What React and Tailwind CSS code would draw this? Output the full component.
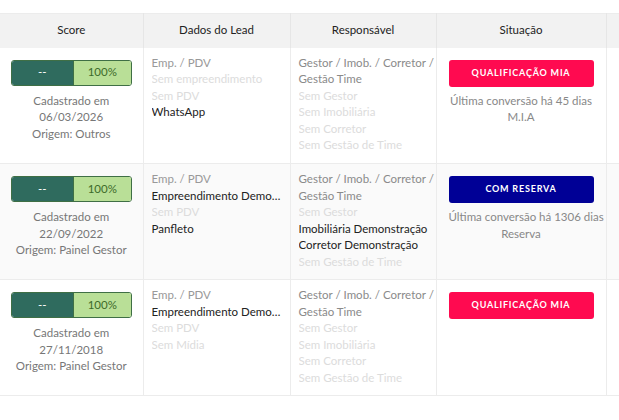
import React from 'react';

const leads = [
    {
        date: '06/03/2026',
        origem: 'Outros',
        emp: null,
        pdv: null,
        midia: 'WhatsApp',
        gestor: null,
        imob: null,
        corretor: null,
        time: null,
        status: 'QUALIFICAÇÃO MIA',
        statusColor: 'bg-[#ff0a50]',
        conversa: 'Última conversão há 45 dias',
        etapa: 'M.I.A',
        bg: 'bg-white',
    },
    {
        date: '22/09/2022',
        origem: 'Painel Gestor',
        emp: 'Empreendimento Demonstração',
        pdv: null,
        midia: 'Panfleto',
        gestor: null,
        imob: 'Imobiliária Demonstração',
        corretor: 'Corretor Demonstração',
        time: null,
        status: 'COM RESERVA',
        statusColor: 'bg-[#000096]',
        conversa: 'Última conversão há 1306 dias',
        etapa: 'Reserva',
        bg: 'bg-[#fafafa]',
    },
    {
        date: '27/11/2018',
        origem: 'Painel Gestor',
        emp: 'Empreendimento Demonstração',
        pdv: null,
        midia: null,
        gestor: null,
        imob: null,
        corretor: null,
        time: null,
        status: 'QUALIFICAÇÃO MIA',
        statusColor: 'bg-[#ff0a50]',
        conversa: null,
        etapa: null,
        bg: 'bg-white',
    },
];

function Line({ value, empty }) {
    if (value) return <div className="text-[#222] truncate">{value}</div>;
    return <div className="text-[#dcdcdc] truncate">{empty}</div>;
}

function ScoreBar() {
    return (
        <div className="flex h-[26px] mx-auto w-[121px] rounded-[3px] border border-[#3f6f45] overflow-hidden">
            <div className="w-[61px] bg-[#2f6b5e] text-white flex items-center justify-center">--</div>
            <div className="flex-1 bg-[#b9df97] text-[#3d6b2a] flex items-center justify-center border-l border-[#3f6f45]">100%</div>
        </div>
    );
}

function App() {
    return (
        <div className="w-[619px] h-[420px] bg-white overflow-hidden pt-[13px]" style={{ fontFamily: 'Lato, "Open Sans", sans-serif' }}>
            <table className="table-fixed border-collapse text-[11.5px] leading-[16.6px] w-[700px]">
                <colgroup>
                    <col className="w-[143px]" />
                    <col className="w-[147px]" />
                    <col className="w-[146px]" />
                    <col className="w-[170px]" />
                    <col />
                </colgroup>
                <thead>
                    <tr className="bg-[#f2f2f2] h-[34px] text-[#222] border-t border-[#ececec]">
                        <th className="font-normal border-r border-[#e6e6e6]">Score</th>
                        <th className="font-normal border-r border-[#e6e6e6]">Dados do Lead</th>
                        <th className="font-normal border-r border-[#e6e6e6]">Responsável</th>
                        <th className="font-normal border-r border-[#e6e6e6]">Situação</th>
                        <th className="font-normal"></th>
                    </tr>
                </thead>
                <tbody>
                    {leads.map((lead, i) => (
                        <tr key={i} className={`${lead.bg} border-b border-[#ececec] h-[116px] align-top`}>
                            <td className="border-r border-[#ececec] pt-[12px] px-[8px] text-center text-[#777]">
                                <ScoreBar />
                                <div className="mt-[7px]">Cadastrado em</div>
                                <div>{lead.date}</div>
                                <div className="whitespace-nowrap">Origem: {lead.origem}</div>
                            </td>
                            <td className="border-r border-[#ececec] pt-[7px] pl-[8px] pr-[7px]">
                                <div className="text-[#999]">Emp. / PDV</div>
                                <Line value={lead.emp} empty="Sem empreendimento" />
                                <Line value={lead.pdv} empty="Sem PDV" />
                                <Line value={lead.midia} empty="Sem Mídia" />
                            </td>
                            <td className="border-r border-[#ececec] pt-[7px] pl-[8px] pr-[2px]">
                                <div className="text-[#8a8a8a] whitespace-nowrap">Gestor / Imob. / Corretor /</div>
                                <div className="text-[#8a8a8a]">Gestão Time</div>
                                <Line value={lead.gestor} empty="Sem Gestor" />
                                <Line value={lead.imob} empty="Sem Imobiliária" />
                                <Line value={lead.corretor} empty="Sem Corretor" />
                                <Line value={lead.time} empty="Sem Gestão de Time" />
                            </td>
                            <td className="border-r border-[#ececec] pt-[12px] px-[12px] text-center">
                                <div className={`${lead.statusColor} h-[27px] rounded-[3px] text-white text-[9px] font-bold tracking-[0.8px] flex items-center justify-center`}>
                                    {lead.status}
                                </div>
                                {lead.conversa && (
                                    <div className="mt-[6px] text-[#888] whitespace-nowrap">
                                        <div>{lead.conversa}</div>
                                        <div>{lead.etapa}</div>
                                    </div>
                                )}
                            </td>
                            <td></td>
                        </tr>
                    ))}
                </tbody>
            </table>
        </div>
    );
}

export default App;
